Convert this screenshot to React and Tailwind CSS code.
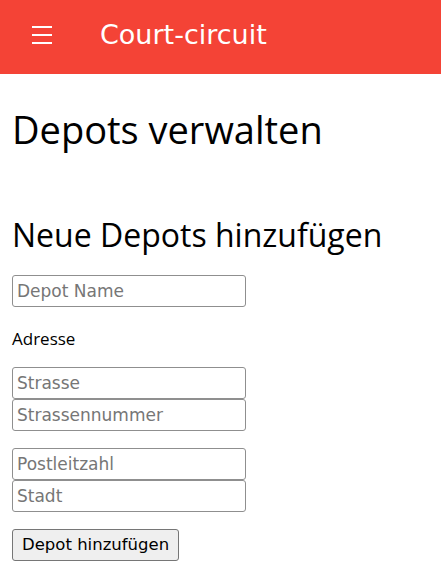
import React from "react";

function Field({ placeholder }) {
  return (
    <input
      placeholder={placeholder}
      className="block w-[234px] h-[32px] px-[4px] border border-[#8f8f8f] rounded-[3px] text-[17px] font-[family-name:'DejaVu_Sans',sans-serif] text-black placeholder:text-[#767676] bg-white outline-none"
    />
  );
}

export default function App() {
  return (
    <div className="min-h-screen bg-white text-black font-[family-name:'Open_Sans','Noto_Sans',sans-serif]">
      <header className="h-[74px] bg-[#f44336] flex items-center text-white">
        <div className="ml-[32px] w-[20px] flex flex-col gap-[6px] mb-[4px]">
          <span className="block h-[2px] bg-white"></span>
          <span className="block h-[2px] bg-white"></span>
          <span className="block h-[2px] bg-white"></span>
        </div>
        <span className="ml-[48px] text-[27px] leading-none mb-[6px] font-[family-name:'DejaVu_Sans',sans-serif]">
          Court-circuit
        </span>
      </header>

      <main className="px-[12px]">
        <h1 className="mt-[29px] text-[38px] leading-[52px] font-normal">Depots verwalten</h1>
        <h2 className="mt-[60px] text-[32px] leading-[40px] font-normal">Neue Depots hinzufügen</h2>

        <form className="mt-[20px] flex flex-col items-start" onSubmit={(e) => e.preventDefault()}>
          <Field placeholder="Depot Name" />
          <p className="mt-[20px] text-[17px] leading-[24px]">Adresse</p>
          <div className="mt-[16px]">
            <Field placeholder="Strasse" />
            <Field placeholder="Strassennummer" />
          </div>
          <div className="mt-[17px]">
            <Field placeholder="Postleitzahl" />
            <Field placeholder="Stadt" />
          </div>
          <button
            type="submit"
            className="mt-[17px] h-[32px] px-[9px] bg-[#efefef] border border-[#767676] rounded-[3px] text-[16.5px] font-[family-name:'DejaVu_Sans',sans-serif] text-black"
          >
            Depot hinzufügen
          </button>
        </form>
      </main>
    </div>
  );
}
